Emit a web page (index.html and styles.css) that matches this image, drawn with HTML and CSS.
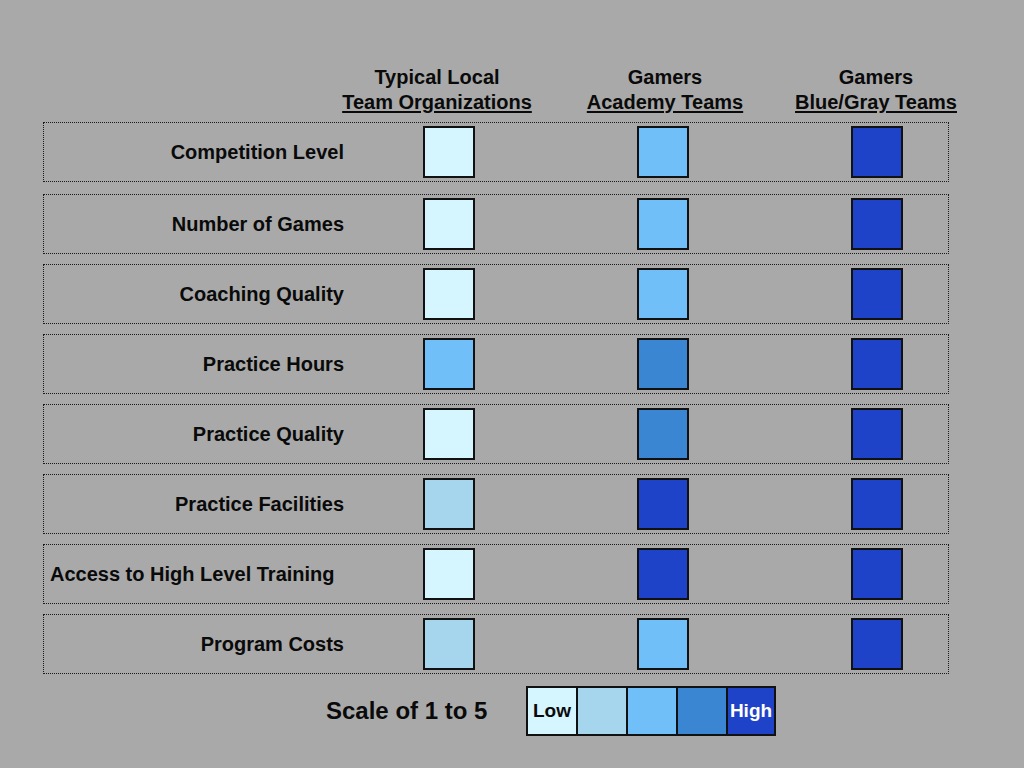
FILE: index.html
```html
<!DOCTYPE html>
<html>
<head>
<meta charset="utf-8">
<link rel="stylesheet" href="styles.css">
</head>
<body>
<div class="page">
  <div class="header">
    <div></div>
    <div class="hcol"><div>Typical Local</div><div class="u">Team Organizations</div></div>
    <div class="hcol"><div>Gamers</div><div class="u">Academy Teams</div></div>
    <div class="hcol"><div>Gamers</div><div class="u">Blue/Gray Teams</div></div>
  </div>
  <div class="rows">
    <div class="row first"><div class="label">Competition Level</div><div class="sq l1"></div><div class="sq l3"></div><div class="sq l5"></div></div>
    <div class="row"><div class="label">Number of Games</div><div class="sq l1"></div><div class="sq l3"></div><div class="sq l5"></div></div>
    <div class="row"><div class="label">Coaching Quality</div><div class="sq l1"></div><div class="sq l3"></div><div class="sq l5"></div></div>
    <div class="row"><div class="label">Practice Hours</div><div class="sq l3"></div><div class="sq l4"></div><div class="sq l5"></div></div>
    <div class="row"><div class="label">Practice Quality</div><div class="sq l1"></div><div class="sq l4"></div><div class="sq l5"></div></div>
    <div class="row"><div class="label">Practice Facilities</div><div class="sq l2"></div><div class="sq l5"></div><div class="sq l5"></div></div>
    <div class="row"><div class="label left">Access to High Level Training</div><div class="sq l1"></div><div class="sq l5"></div><div class="sq l5"></div></div>
    <div class="row"><div class="label">Program Costs</div><div class="sq l2"></div><div class="sq l3"></div><div class="sq l5"></div></div>
  </div>
  <div class="scale">
    <div class="scale-label">Scale of 1 to 5</div>
    <div class="scale-bar">
      <div class="cell l1">Low</div>
      <div class="cell l2"></div>
      <div class="cell l3"></div>
      <div class="cell l4"></div>
      <div class="cell l5 hi">High</div>
    </div>
  </div>
</div>
</body>
</html>
```
FILE: styles.css
```css
html, body {
  margin: 0;
  padding: 0;
  background: #a9a9a9;
}
body {
  width: 1024px;
  height: 768px;
  overflow: hidden;
  font-family: "Liberation Sans", Arial, sans-serif;
  font-weight: bold;
  color: #0a0a0a;
}
.page {
  padding-top: 65px;
}
.header {
  display: grid;
  grid-template-columns: 315px 244px 212px 210px;
  font-size: 20px;
  line-height: 25px;
  text-align: center;
}
.u {
  text-decoration: underline;
  text-underline-offset: 2px;
}
.rows {
  margin-top: 7px;
  margin-left: 43px;
  width: 906px;
  display: flex;
  flex-direction: column;
  gap: 10px;
}
.row {
  box-sizing: border-box;
  height: 60px;
  border: 1px dotted #1a1a1a;
  display: flex;
  align-items: center;
}
.row.first {
  margin-bottom: 2px;
}
.label {
  width: 300px;
  text-align: right;
  font-size: 20px;
  margin-right: 79px;
}
.label.left {
  text-align: left;
  padding-left: 6px;
  box-sizing: border-box;
}
.sq {
  box-sizing: border-box;
  width: 52px;
  height: 52px;
  border: 2px solid #111;
  margin-right: 162px;
}
.sq:last-child {
  margin-right: 0;
}
.l1 { background: #d5f5ff; }
.l2 { background: #a6d5ee; }
.l3 { background: #70bff8; }
.l4 { background: #3a86d3; }
.l5 { background: #1f43c8; }
.scale {
  margin-top: 12px;
  display: flex;
  align-items: center;
}
.scale-label {
  margin-left: 326px;
  width: 200px;
  font-size: 24px;
}
.scale-bar {
  display: flex;
  border: 2px solid #111;
  height: 50px;
  box-sizing: border-box;
}
.cell {
  box-sizing: border-box;
  width: 50px;
  height: 46px;
  border-right: 2px solid #111;
  display: flex;
  align-items: center;
  justify-content: center;
  font-size: 19px;
}
.cell:last-child {
  border-right: none;
  width: 46px;
}
.cell.hi {
  color: #fff;
}
```
